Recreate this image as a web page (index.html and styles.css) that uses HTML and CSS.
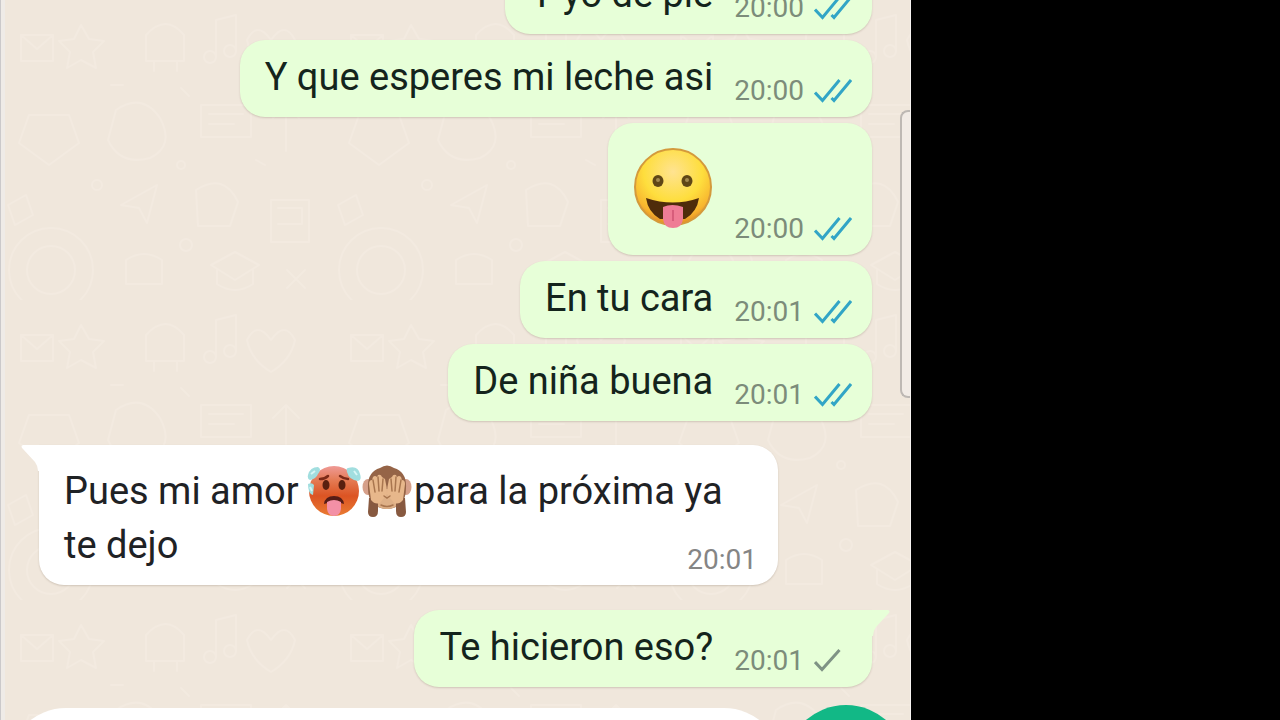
FILE: index.html
```html
<!DOCTYPE html>
<html lang="es">
<head>
<meta charset="utf-8">
<title>Chat</title>
<link rel="stylesheet" href="styles.css">
</head>
<body>
<svg class="defs" aria-hidden="true">
  <defs>
    <symbol id="double" viewBox="0 0 38 26"><path d="M1 14.500L8.500 22.500L25.500 2M17.500 20L20 22.500L37 2"/></symbol>
    <symbol id="single" viewBox="0 0 38 26"><path d="M1 14L8 21.500L25.500 2"/></symbol>
    <pattern id="doodles" width="330" height="300" patternUnits="userSpaceOnUse">
      <g fill="none" stroke="#f6eee5" stroke-width="2" stroke-linecap="round" stroke-linejoin="round">
        <circle cx="50" cy="270" r="24"/><circle cx="50" cy="270" r="42"/>
        <path d="M20 35h32v26H20zM20 35l16 14 16-14M80 25l8 14 15 2-11 11 3 16-15-8-14 8 3-16-11-11 15-2z"/>
        <path d="M145 35q20-22 38 0v26h-38zM153 61v10M176 61v10M215 20v36M215 20l20-5v35"/><circle cx="209" cy="57" r="6"/><circle cx="229" cy="51" r="6"/>
        <path d="M270 40q-14-20-24 0 4 20 24 32 20-12 24-32-10-20-24 0M28 115h40l10 28-30 22-30-22zM115 110q26-18 44 8 15 28-10 40-30 8-42-18z"/>
        <path d="M200 105h50v32h-50zM208 114h34M208 124h25M285 105v46M272 118l13-13 13 13M120 205l36-20-10 38-8-15zM195 190q28-18 42 12l-8 24h-32zM270 200h38v42h-38zM277 208h24v16h-24M125 260q18-12 36 0v24h-36zM210 265l24-13 24 13-24 15zM216 270v14q18 12 36 0v-14"/>
        <circle cx="96" cy="185" r="5"/><circle cx="180" cy="165" r="4"/><circle cx="185" cy="245" r="6"/><path d="M7 205l18-10 7 20-18 10zM286 270l18 18M304 270l-18 18M110 85h12M180 88l8 8M255 160l9 5"/>
      </g>
    </pattern>
    <radialGradient id="yellow" cx=".5" cy=".3" r=".7"><stop offset="0" stop-color="#ffe391"/><stop offset=".55" stop-color="#fede3d"/><stop offset=".85" stop-color="#f8b52f"/><stop offset="1" stop-color="#e08b24"/></radialGradient>
    <linearGradient id="heat" x1="0" y1="0" x2="0" y2="1"><stop offset="0" stop-color="#ef9a96"/><stop offset=".3" stop-color="#e47951"/><stop offset=".6" stop-color="#dc5423"/><stop offset="1" stop-color="#e97b32"/></linearGradient>
  </defs>
</svg>
<div class="screen">
  <main class="chat">
    <svg class="wallpaper" aria-hidden="true"><rect width="100%" height="100%" fill="url(#doodles)"/></svg>
    <section class="messages">
      <article class="bubble sent"><p class="text">Y yo de pie</p><time class="time">20:00</time><svg class="ticks read" role="img" aria-label="Leído"><use href="#double"/></svg></article>
      <article class="bubble sent"><p class="text">Y que esperes mi leche asi</p><time class="time">20:00</time><svg class="ticks read" role="img" aria-label="Leído"><use href="#double"/></svg></article>
      <article class="bubble sent">
        <svg class="big-emoji" viewBox="0 0 80 82" role="img" aria-label="Cara sacando la lengua">
          <circle cx="40" cy="40" r="38" fill="url(#yellow)" stroke="#d49a3c" stroke-width="2"/>
          <ellipse cx="25" cy="34" rx="5.500" ry="6" fill="#5f4616"/><ellipse cx="54" cy="34" rx="5.500" ry="6" fill="#5f4616"/>
          <circle cx="25" cy="33" r="2" fill="#a38a50"/><circle cx="54" cy="33" r="2" fill="#a38a50"/>
          <path d="M13 51q27 9 53 0-2 14-14 21H27Q15 65 13 51z" fill="#4f2c0b"/>
          <path d="M30 60q9-4 20 0v12q-1 9-10 9t-10-9z" fill="#ef7c95"/><path d="M40 63v11" stroke="#d75d7b" stroke-width="2"/>
        </svg>
        <time class="time">20:00</time><svg class="ticks read" role="img" aria-label="Leído"><use href="#double"/></svg>
      </article>
      <article class="bubble sent"><p class="text">En tu cara</p><time class="time">20:01</time><svg class="ticks read" role="img" aria-label="Leído"><use href="#double"/></svg></article>
      <article class="bubble sent"><p class="text">De niña buena</p><time class="time">20:01</time><svg class="ticks read" role="img" aria-label="Leído"><use href="#double"/></svg></article>
      <article class="bubble received">
        <svg class="tail" viewBox="0 0 18 26" aria-hidden="true"><path d="M18 0H2Q-1 1 2 4L14 17Q17 21 17 26H18z" fill="#fff"/></svg>
        <p class="text">Pues mi amor <svg class="emoji" viewBox="0 0 54 54" role="img" aria-label="Cara con calor">
            <circle cx="27" cy="27" r="25" fill="url(#heat)"/>
            <path d="M13 15q5 0 8-3M33 12q4 3 8 3" fill="none" stroke="#7c2a18" stroke-width="2.500" stroke-linecap="round"/>
            <ellipse cx="19" cy="21" rx="3.500" ry="5" fill="#59200f"/><ellipse cx="35" cy="21" rx="3.500" ry="5" fill="#59200f"/>
            <path d="M17 40q1-8 10-8t10 8q-9-4-20 0z" fill="#561c16"/><path d="M20 38q7-4 14 0v7q-1 7-7 7t-7-7z" fill="#f390a6"/>
            <path d="M1 11Q3 3 11 3q4 2 0 7-2 5-8 6-3-1-2-5M41 4q10-3 12 6 2 6-2 7-9-1-11-9-1-4 1-4M1 20q4-2 6 1l-1 10q-5-1-5-11" fill="#a1dedf"/>
            <path d="M4 10l4-3M47 7l3 4M3 23l2 4" stroke="#d8f6f5" stroke-width="2"/>
          </svg><svg class="emoji monkey" viewBox="0 0 50 54" role="img" aria-label="Mono tapándose los ojos">
            <ellipse cx="6" cy="23" rx="5.500" ry="8" fill="#d6a08a"/><ellipse cx="44" cy="23" rx="5.500" ry="8" fill="#d6a08a"/>
            <path d="M6 24Q5 8 18 4q7-5 14 0 13 4 12 20 0 20-19 21Q6 44 6 24" fill="#956447"/>
            <ellipse cx="25" cy="35" rx="14" ry="10" fill="#deb087"/>
            <path d="M7 34l-1 14q0 5 5 5t5-6V34M34 34v13q0 6 5 6t5-5l-1-14" fill="#875940"/>
            <path d="M9 36L7 20q0-4 3-4l1-3q2-2 4 0l1-2q3-1 4 2l3 2q2 8 2 15l-7 9q-5 2-9-3M41 36l2-16q0-4-3-4l-1-3q-2-2-4 0l-1-2q-3-1-4 2l-3 2q-2 8-2 15l7 9q5 2 9-3" fill="#e7b78b"/>
            <path d="M11 16l2 12M16 13l1 14M21 15l-1 12M39 16l-2 12M34 13l-1 14M29 15l1 12M22 32l3 2 3-2M19 41q6 3 12 0" fill="none" stroke="#a9764f" stroke-width="1.500" stroke-linecap="round"/>
          </svg>para la próxima ya te dejo</p>
        <time class="time">20:01</time>
      </article>
      <article class="bubble sent turn">
        <svg class="tail" viewBox="0 0 18 26" aria-hidden="true"><path d="M0 0H16Q19 1 16 4L4 17Q1 21 1 26H0z" fill="#e7ffd8"/></svg>
        <p class="text">Te hicieron eso?</p><time class="time">20:01</time><svg class="ticks" role="img" aria-label="Enviado"><use href="#single"/></svg>
      </article>
    </section>
    <footer class="composer"><input class="field" type="text" aria-label="Mensaje"><button class="voice" type="button" aria-label="Mensaje de voz"></button></footer>
    <div class="handle"></div>
  </main>
</div>
</body>
</html>
```
FILE: styles.css
```css
* { box-sizing: border-box; }
body { margin: 0; background: #000; font-family: Roboto, "Liberation Sans", sans-serif; }
.defs { position: absolute; width: 0; height: 0; }
.screen { display: grid; grid-template-columns: 911fr 369fr; height: 100vh; }
.chat {
  position: relative;
  display: flex;
  flex-direction: column;
  min-width: 0;
  min-height: 0;
  overflow: hidden;
  background: #f0e7dc;
  border-left: 1px solid #cbc9ca;
  border-right: 1px solid #f7f4f2;
  box-shadow: inset 4px 0 0 #efebe7;
}
.wallpaper { position: absolute; inset: 0; width: 100%; height: 100%; opacity: 0.5; }
.messages {
  position: relative;
  flex: 1;
  min-height: 0;
  display: flex;
  flex-direction: column;
  justify-content: flex-end;
  gap: 6px;
  padding: 0 38px 18px;
}
.bubble {
  position: relative;
  flex: none;
  border-radius: 25px;
  box-shadow: 0 1px 2px rgba(80, 60, 40, 0.2);
  color: #14241c;
}
.sent {
  align-self: flex-end;
  display: flex;
  align-items: flex-end;
  padding: 10px 20px 10px 25px;
  background: #e7ffd8;
}
.sent .text { margin-bottom: 3px; }
.text { margin: 0; font-size: 38px; line-height: 54px; }
.time { margin-left: 21px; font-size: 28px; line-height: 32px; color: #7c8c7a; }
.ticks {
  width: 38px;
  height: 26px;
  margin: 0 0 3px 10px;
  fill: none;
  stroke: #7f9385;
  stroke-width: 3;
}
.read { stroke: #32a5c6; }
.big-emoji { width: 80px; height: 82px; margin: 14px 0 16px; }
.received {
  align-self: flex-start;
  display: grid;
  max-width: calc(100% - 94px);
  margin: 18px 0 19px;
  padding: 19px 21px 9px 25px;
  background: #fff;
  color: #1f2225;
  border-top-left-radius: 0;
}
.received .text { grid-area: 1 / 1; padding-bottom: 4px; }
.received .time { grid-area: 1 / 1; align-self: end; justify-self: end; color: #858585; }
.emoji { width: 54px; height: 54px; margin: 0 2px 0 0; vertical-align: -10px; }
.text .emoji { margin-top: -12px; margin-bottom: -4px; margin-left: -1px; }
.text .monkey { width: 50px; }
.tail { position: absolute; top: 0; width: 18px; height: 26px; }
.received .tail { right: 100%; }
.turn { border-top-right-radius: 0; }
.turn .tail { left: 100%; }
.composer {
  position: relative;
  flex: none;
  display: flex;
  align-items: flex-start;
  gap: 3px;
  height: 15px;
  padding: 0 3px 0 7px;
  overflow: hidden;
}
.field { flex: 1; min-width: 0; height: 116px; margin-top: 3px; padding: 0 60px; border: 0; border-radius: 60px; background: #fff; font: inherit; }
.voice { flex: none; width: 122px; height: 122px; padding: 0; border: 0; border-radius: 50%; background: #12b886; }
.handle {
  position: absolute;
  top: 110px;
  right: 0;
  width: 10px;
  height: 288px;
  border: 2px solid #bdb8b4;
  border-right: 0;
  border-radius: 8px 0 0 8px;
  background: #f1ebe6;
}
```
